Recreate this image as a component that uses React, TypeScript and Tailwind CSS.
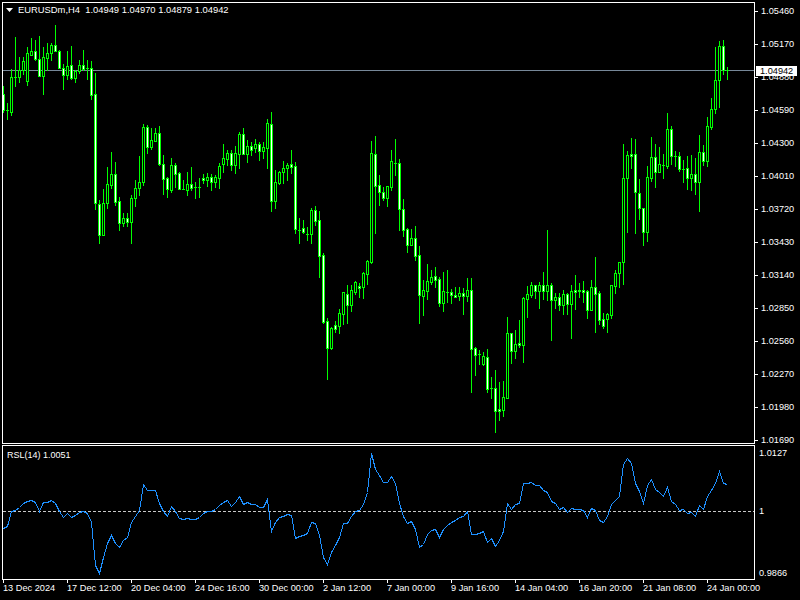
import React from 'react'

// [high, bodyTop, bodyBottom, low, white body]; candles sit 4px apart starting at x=3
const candles: [number, number, number, number, number][] = [
  [86, 94, 110, 112, 1], [103, 110, 110, 119, 0], [69, 77, 112, 115, 0], [37, 77, 77, 86, 0],
  [57, 70, 77, 82, 0], [57, 61, 70, 74, 0], [47, 53, 81, 85, 0], [38, 51, 55, 55, 0],
  [40, 51, 59, 60, 1], [36, 59, 76, 76, 1], [47, 57, 76, 94, 0], [43, 53, 58, 70, 0],
  [43, 45, 53, 60, 0], [25, 45, 51, 51, 1], [50, 51, 68, 68, 1], [64, 68, 75, 89, 1],
  [51, 66, 75, 79, 0], [46, 65, 78, 79, 1], [70, 71, 78, 82, 0], [60, 65, 71, 73, 0],
  [50, 65, 69, 70, 1], [60, 68, 68, 79, 0], [61, 68, 95, 99, 1], [73, 94, 203, 209, 1],
  [200, 204, 235, 243, 1], [189, 203, 235, 235, 0], [167, 184, 203, 208, 0], [152, 174, 185, 188, 0],
  [162, 174, 202, 205, 1], [197, 201, 223, 230, 1], [213, 218, 223, 226, 0], [213, 218, 222, 226, 1],
  [195, 198, 222, 243, 0], [180, 188, 198, 206, 0], [156, 182, 188, 195, 0], [124, 127, 182, 185, 0],
  [125, 127, 147, 153, 1], [128, 140, 147, 149, 0], [128, 133, 141, 141, 0], [126, 133, 164, 165, 1],
  [155, 164, 179, 194, 1], [177, 178, 189, 197, 1], [158, 165, 190, 192, 0], [163, 165, 174, 187, 1],
  [172, 173, 189, 189, 1], [180, 189, 189, 189, 0], [172, 184, 190, 195, 0], [167, 184, 188, 190, 1],
  [182, 187, 187, 198, 0], [178, 187, 187, 197, 0], [174, 178, 180, 183, 1], [173, 177, 180, 186, 0],
  [174, 177, 182, 190, 1], [175, 177, 182, 187, 0], [163, 166, 178, 188, 0], [144, 158, 164, 172, 0],
  [150, 153, 159, 165, 0], [150, 153, 165, 170, 1], [146, 153, 165, 173, 0], [132, 134, 154, 168, 0],
  [128, 134, 154, 154, 1], [140, 146, 154, 162, 0], [142, 146, 150, 155, 1], [139, 144, 148, 152, 0],
  [142, 144, 151, 160, 1], [142, 147, 151, 158, 0], [119, 123, 148, 168, 0], [112, 124, 201, 211, 1],
  [170, 182, 201, 208, 0], [171, 172, 183, 184, 0], [161, 168, 172, 183, 0], [163, 165, 168, 180, 0],
  [150, 164, 167, 173, 1], [162, 166, 229, 233, 1], [218, 230, 230, 243, 0], [220, 228, 232, 233, 1],
  [227, 234, 234, 240, 0], [208, 210, 234, 243, 0], [206, 210, 221, 225, 1], [211, 220, 256, 277, 1],
  [253, 255, 322, 323, 1], [318, 321, 348, 379, 1], [327, 328, 348, 349, 0], [321, 325, 329, 332, 1],
  [309, 313, 326, 333, 0], [292, 292, 314, 324, 0], [285, 294, 305, 323, 1], [285, 290, 305, 311, 0],
  [281, 282, 292, 294, 0], [283, 286, 288, 297, 1], [272, 273, 287, 298, 0], [260, 261, 274, 284, 0],
  [141, 153, 262, 263, 0], [136, 154, 186, 233, 1], [175, 185, 192, 205, 1], [187, 192, 198, 200, 1],
  [186, 186, 198, 206, 0], [150, 161, 187, 190, 0], [139, 163, 163, 175, 0], [159, 163, 209, 230, 1],
  [199, 209, 230, 236, 1], [228, 229, 245, 252, 1], [229, 238, 245, 245, 0], [226, 238, 256, 260, 1],
  [246, 255, 295, 323, 1], [280, 290, 296, 315, 0], [264, 281, 291, 299, 0], [270, 277, 282, 284, 0],
  [267, 276, 280, 287, 1], [277, 279, 303, 306, 1], [272, 291, 303, 311, 0], [270, 292, 292, 302, 0],
  [289, 292, 295, 303, 1], [287, 295, 297, 297, 1], [287, 293, 296, 300, 0], [288, 293, 296, 314, 1],
  [278, 290, 296, 301, 0], [278, 290, 349, 392, 1], [347, 348, 355, 375, 1], [350, 354, 354, 364, 0],
  [352, 356, 364, 365, 0], [349, 357, 389, 392, 1], [377, 388, 388, 398, 0], [370, 388, 411, 432, 1],
  [382, 409, 411, 420, 1], [381, 397, 410, 416, 0], [317, 333, 398, 398, 0], [333, 333, 351, 363, 1],
  [330, 344, 351, 358, 0], [320, 343, 345, 347, 1], [297, 298, 345, 362, 0], [286, 294, 299, 317, 0],
  [282, 285, 295, 297, 0], [285, 285, 291, 298, 1], [282, 285, 291, 308, 0], [272, 285, 291, 299, 1],
  [230, 285, 291, 300, 0], [283, 285, 300, 340, 1], [293, 297, 300, 308, 0], [293, 297, 305, 310, 1],
  [290, 294, 305, 314, 0], [293, 294, 304, 314, 1], [285, 291, 304, 338, 0], [275, 290, 292, 309, 1],
  [283, 290, 291, 297, 1], [281, 290, 292, 302, 1], [290, 291, 310, 318, 1], [280, 287, 310, 310, 0],
  [257, 287, 294, 332, 1], [291, 293, 320, 324, 1], [313, 319, 326, 328, 1], [313, 314, 319, 332, 0],
  [285, 285, 315, 318, 0], [270, 273, 286, 293, 0], [262, 262, 273, 287, 0], [144, 178, 262, 284, 0],
  [151, 155, 178, 232, 0], [138, 154, 156, 168, 1], [139, 154, 192, 233, 1], [179, 193, 208, 219, 1],
  [208, 208, 232, 245, 1], [166, 177, 232, 241, 0], [137, 157, 178, 181, 0], [144, 157, 172, 187, 1],
  [147, 164, 172, 172, 0], [154, 165, 165, 178, 0], [113, 129, 166, 168, 0], [126, 129, 156, 164, 1],
  [151, 156, 156, 166, 0], [152, 156, 169, 171, 1], [160, 169, 169, 182, 0], [156, 168, 178, 189, 1],
  [155, 174, 178, 190, 0], [158, 174, 182, 194, 1], [135, 152, 182, 211, 0], [145, 152, 161, 165, 1],
  [117, 126, 161, 166, 0], [98, 109, 127, 129, 0], [47, 80, 109, 113, 0], [41, 46, 80, 107, 0],
  [40, 46, 70, 74, 1], [67, 70, 70, 79, 0],
]

const rsl = [
  528, 526, 511, 510, 507, 503, 501, 500, 502, 511, 502, 502, 500, 503, 511, 517, 513, 517, 515, 512,
  511, 513, 522, 565, 573, 557, 543, 535, 543, 547, 540, 537, 522, 516, 510, 484, 490, 490, 490, 503,
  511, 516, 506, 511, 518, 519, 518, 519, 519, 517, 513, 511, 511, 509, 505, 502, 500, 506, 502, 496,
  504, 502, 504, 504, 507, 507, 499, 531, 522, 517, 516, 514, 515, 538, 536, 535, 533, 522, 523, 535,
  557, 564, 552, 545, 537, 523, 523, 516, 511, 510, 504, 492, 453, 469, 475, 482, 482, 476, 483, 503,
  516, 523, 521, 529, 547, 544, 534, 530, 529, 537, 529, 525, 522, 520, 517, 516, 511, 534, 534, 533,
  531, 542, 538, 546, 540, 531, 503, 509, 504, 503, 483, 483, 482, 485, 485, 490, 492, 501, 503, 509,
  507, 512, 508, 509, 509, 510, 517, 508, 510, 520, 522, 516, 504, 500, 496, 464, 458, 463, 483, 491,
  503, 485, 479, 489, 492, 496, 487, 501, 504, 510, 509, 513, 512, 516, 505, 509, 496, 490, 483, 471,
  483, 484,
]

const prices = [
  '1.05460', '1.05170', '1.04880', '1.04590', '1.04300', '1.04010', '1.03720',
  '1.03430', '1.03140', '1.02850', '1.02560', '1.02270', '1.01980', '1.01690',
]

const times = [
  '13 Dec 2024', '17 Dec 12:00', '20 Dec 04:00', '24 Dec 16:00', '30 Dec 00:00', '2 Jan 12:00',
  '7 Jan 00:00', '9 Jan 16:00', '14 Jan 04:00', '16 Jan 20:00', '21 Jan 08:00', '24 Jan 00:00',
]

function Candle({ data, x }: { data: [number, number, number, number, number]; x: number }) {
  const [high, top, bottom, low, white] = data
  return (
    <g>
      <rect x={x} y={high} width={1} height={low - high + 1} fill="#00ff00" />
      <rect x={x - 1} y={top} width={3} height={bottom - top + 1} fill="#00ff00" />
      {bottom - top > 1 && (
        <rect x={x} y={top + 1} width={1} height={bottom - top - 1} fill={white ? '#ffffff' : '#000000'} />
      )}
    </g>
  )
}

export default function App() {
  const rslPoints = rsl.map((y, i) => `${3 + 4 * i + 0.5},${y + 0.5}`).join(' ')

  return (
    <div className="w-[800px] h-[600px] bg-black overflow-hidden flex flex-col pt-[2px] pl-[2px] font-['Liberation_Sans',sans-serif] text-[9.2px] leading-[12px] text-white">
      {/* Price chart */}
      <div className="flex h-[442px] shrink-0">
        <div className="relative w-[753px] h-full border border-white">
          <svg className="block w-[751px] h-[440px]" viewBox="3 3 751 440" shapeRendering="crispEdges">
            <rect x={3} y={70} width={751} height={1} fill="#778899" />
            {candles.map((c, i) => (
              <Candle key={i} data={c} x={3 + 4 * i} />
            ))}
          </svg>
          <div className="absolute left-[3px] top-[1px] flex items-center gap-[5px] whitespace-pre text-[9.4px]">
            <svg width="7" height="4" viewBox="0 0 7 4">
              <path d="M0 0H7L3.5 4Z" fill="#ffffff" />
            </svg>
            <span>EURUSDm,H4  1.04949 1.04970 1.04879 1.04942</span>
          </div>
        </div>
        <div className="relative w-[45px] flex flex-col gap-[21px] pt-[3px]">
          {prices.map((p) => (
            <div key={p} className="flex items-center h-3 shrink-0">
              <div className="w-[3px] h-px bg-white" />
              <span className="ml-[3px]">{p}</span>
            </div>
          ))}
          <div className="absolute left-px top-[64px] w-[41px] h-[10px] bg-white text-black pl-[4px] leading-[10px]">
            1.04942
          </div>
        </div>
      </div>

      {/* RSL indicator */}
      <div className="flex h-[135px] mt-px shrink-0">
        <div className="relative w-[753px] h-full border border-white">
          <svg className="block w-[751px] h-[133px]" viewBox="3 446 751 133" shapeRendering="crispEdges">
            <line x1={3} y1={511.5} x2={754} y2={511.5} stroke="#c8c8c8" strokeDasharray="3 2" />
            <polyline points={rslPoints} fill="none" stroke="#1e90ff" strokeWidth={1} />
          </svg>
          <div className="absolute left-[4px] top-[3px] text-[9px]">RSL(14) 1.0051</div>
        </div>
        <div className="w-[45px] flex flex-col pt-[2px] pl-[4px]">
          <div>1.0127</div>
          <div className="mt-[46px]">1</div>
          <div className="mt-[50px]">0.9866</div>
        </div>
      </div>

      {/* Time axis */}
      <div className="flex pl-px">
        {times.map((t) => (
          <div key={t} className="w-[64px] shrink-0">
            <div className="w-px h-[3px] bg-white" />
            <div className="whitespace-nowrap mt-[-1px]">{t}</div>
          </div>
        ))}
      </div>
    </div>
  )
}
